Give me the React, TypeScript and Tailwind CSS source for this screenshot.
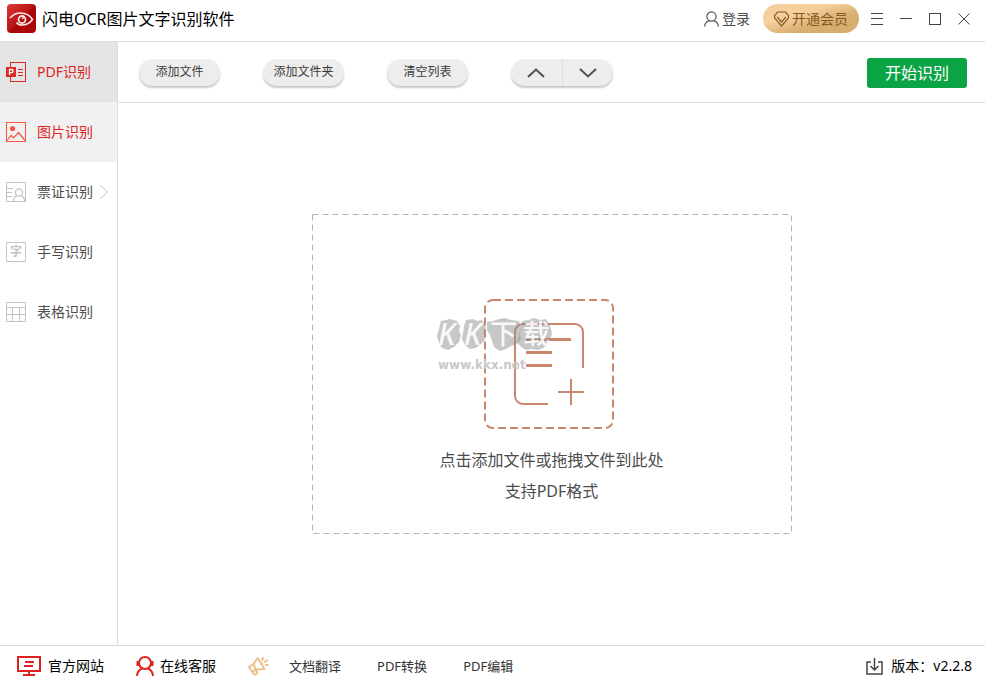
import { useState } from "react";
import type { ReactNode } from "react";

function LogoIcon() {
  return (
    <svg width="29" height="29" viewBox="0 0 29 29" fill="none" aria-hidden="true">
      <defs>
        <linearGradient id="logo-bg" x1="0" y1="0" x2="29" y2="29" gradientUnits="userSpaceOnUse">
          <stop offset="0" stopColor="#dd3a38" />
          <stop offset="0.45" stopColor="#bb1718" />
          <stop offset="0.55" stopColor="#a80607" />
          <stop offset="1" stopColor="#b00a0b" />
        </linearGradient>
      </defs>
      <rect width="29" height="29" rx="4" fill="url(#logo-bg)" />
      <path d="M3 14C6 10.500 9.500 9 13.500 9c5 0 9.500 2.500 12 6.500-2.500 3.500-6 5.500-10.500 5.500-2.500 0-4.500-1-5.500-2.500" stroke="#fbe6e6" strokeWidth="1.600" />
      <circle cx="15" cy="15.500" r="3.500" stroke="#fbe6e6" strokeWidth="1.800" />
      <path d="M15 15l2.500-2" stroke="#fbe6e6" strokeWidth="1.500" />
    </svg>
  );
}

function UserIcon() {
  return (
    <svg width="15" height="16" viewBox="0 0 15 16" fill="none" stroke="#555" strokeWidth="1.200" aria-hidden="true">
      <circle cx="7.500" cy="5.500" r="4.600" />
      <path d="M.6 15.500c.2-3 2-5 4.600-5.900M14.400 15.500c-.2-3-2-5-4.600-5.900" />
    </svg>
  );
}

function DiamondIcon() {
  return (
    <svg width="15" height="16" viewBox="0 0 15 16" fill="none" stroke="#86591f" strokeWidth="1.200" aria-hidden="true">
      <path d="M3.500 1h8l3 3.600v2.200L7.500 15 .6 6.800V4.600z" />
      <path d="M3.200 6l4.300 5L11.800 6" />
    </svg>
  );
}

function PdfIcon() {
  return (
    <svg width="20" height="20" viewBox="0 0 20 20" fill="none" aria-hidden="true">
      <rect x="4.500" y=".5" width="15" height="19" stroke="#dc2a27" />
      <path d="M12 7.500h5M12 10.500h5M12 13.500h5" stroke="#dc2a27" />
      <rect y="5" width="10" height="10" fill="#dc2a27" />
      <path d="M3.500 13V7.500h2a1.500 1.500 0 0 1 0 3.200h-2" stroke="#fff" strokeWidth="1.300" />
    </svg>
  );
}

function PictureIcon() {
  return (
    <svg width="20" height="20" viewBox="0 0 20 20" fill="none" stroke="#fa5647" aria-hidden="true">
      <rect x=".5" y=".5" width="19" height="19" />
      <circle cx="6.500" cy="6.500" r="2.600" fill="#fa5647" stroke="none" />
      <path d="M1 18.500l4-5 2.500 2.300L12.500 10.500l6.500 8M7.500 15.800l1.500-1.500" strokeWidth="1.200" />
    </svg>
  );
}

function CardIcon() {
  return (
    <svg width="20" height="20" viewBox="0 0 20 20" fill="none" stroke="#c3c3c3" aria-hidden="true">
      <rect x=".5" y=".5" width="19" height="19" />
      <path d="M1 6.500h6M1 10.500h5M1 14.500h5" />
      <circle cx="13" cy="10.500" r="3.600" strokeWidth="1.200" />
      <path d="M7.500 19c0-2.800 1.400-4.600 3.500-5.300M18.500 19c0-2.800-1.400-4.600-3.500-5.300" strokeWidth="1.200" />
    </svg>
  );
}

function HandwritingIcon() {
  return (
    <span className="flex size-5 items-center justify-center border border-[#c3c3c3] text-[12px] leading-none font-bold text-[#c3c3c3]" aria-hidden="true">
      字
    </span>
  );
}

function TableIcon() {
  return (
    <svg width="20" height="20" viewBox="0 0 20 20" fill="none" stroke="#c3c3c3" aria-hidden="true">
      <rect x=".5" y=".5" width="19" height="19" />
      <path d="M1 5.500h18M1 12.500h18M6.500 6v13M13.500 6v13" />
    </svg>
  );
}

function MonitorIcon() {
  return (
    <svg width="24" height="20" viewBox="0 0 24 20" fill="none" stroke="#dc231f" strokeWidth="2" aria-hidden="true">
      <rect x="1" y="1" width="22" height="14" />
      <path d="M8 6h9M7 10h9M12 15v4M6 19h12" />
    </svg>
  );
}

function SupportIcon() {
  return (
    <svg width="18" height="20" viewBox="0 0 18 20" fill="none" stroke="#dc231f" strokeWidth="2" aria-hidden="true">
      <circle cx="9" cy="7" r="6" />
      <path d="M1 20c.2-3.500 2-6.200 5-7.500M17 20c-.2-3.500-2-6.200-5-7.500" />
      <path d="M2 5v5M16 5v5" strokeWidth="3" />
    </svg>
  );
}

function MegaphoneIcon() {
  return (
    <svg width="21" height="20" viewBox="0 0 21 20" fill="none" stroke="#efc28c" strokeWidth="2" strokeLinejoin="round" aria-hidden="true">
      <path d="M9.500 2l7 11-8.500.6-3.800 2.200L1 11.200l4.500-3z" />
      <path d="M5.500 8.200l2.500 5.400M4.500 15.800l1.800 3 3-1.600-1.300-3.300" />
      <path d="M13.800 4.800l1.800-3.800M16 6.500l3.800-2.600M17 9h3.500" />
      <path d="M12.500 6.500c1.500 0 2.200 1.200 1.700 2.500" strokeWidth="1.500" />
    </svg>
  );
}

function DownloadIcon() {
  return (
    <svg width="17" height="17" viewBox="0 0 17 17" fill="none" stroke="#444" strokeWidth="1.500" aria-hidden="true">
      <path d="M5 4H1v12h15V4h-4" />
      <path d="M8.500 0v12M4.500 8l4 4 4-4" />
    </svg>
  );
}

function AddFileIcon() {
  return (
    <svg width="136" height="130" viewBox="0 0 136 130" fill="none" stroke="#c9876e" strokeWidth="2" aria-hidden="true">
      <rect x="1" y="1" width="128" height="128" rx="8" strokeDasharray="8 4" />
      <path d="M64 105H39a8 8 0 0 1-8-8V33a8 8 0 0 1 8-8h52a8 8 0 0 1 8 8v36" />
      <path d="M42 40.500h45M42 53.500h26M42 66.500h26" strokeWidth="3" />
      <path d="M87 80v26M74 93h26" />
    </svg>
  );
}

function Watermark() {
  return (
    <svg
      className="pointer-events-none absolute top-[90px] left-[120px]"
      width="126"
      height="76"
      viewBox="-4 -12 126 76"
      fontFamily="'Noto Sans', 'Noto Sans CJK SC', sans-serif"
    >
      <g fill="#8f8f8f" fillOpacity="0.500">
        <path d="M5 5l5-1 4-1 7 2 3 5-1 5 2 4-2 7-5 5-6 3-6-2-3-5-2-7 2-7z" />
        <path d="M30 4l7-1 4 2 5-1 3 5 1 5-2 5 1 5-4 4-5 4-6 1-5-4-3-6 1-6 1-7z" />
        <path d="M51 6l6-1 6-2 6-1 6 2 8 1 2 6-1 6 1 6-4 5-6 2-5 3-6 2-6-4-2-6-2-6-3-5z" />
        <path d="M86 5l7-1 5-2 6 2 6-1 3 5 2 5 1 5-2 5-2 6-5 3-5 2-6-1-6 1-5-3-4-5 2-6 1-6z" />
      </g>
      <g fill="#fff" fillOpacity="0.900" fontSize="27" fontWeight="500">
        <text x="2" y="29" fontSize="30" fontStyle="italic">K</text>
        <text x="28" y="29" fontSize="30" fontStyle="italic">K</text>
        <text x="54" y="28">下</text>
        <text x="87" y="28">载</text>
      </g>
      <text x="2" y="53" fill="#c9c9c9" fontSize="12" fontWeight="700" fontFamily="'DejaVu Sans', sans-serif">
        www.kkx.net
      </text>
    </svg>
  );
}

type NavItem = {
  label: string;
  icon: ReactNode;
  className: string;
  hasMore?: boolean;
};

const navItems: NavItem[] = [
  { label: "PDF识别", icon: <PdfIcon />, className: "bg-[#e4e4e4] text-[#dc231f]" },
  { label: "图片识别", icon: <PictureIcon />, className: "bg-[#f1f1f1] text-[#dc231f]" },
  { label: "票证识别", icon: <CardIcon />, className: "text-[#4c4c4c]", hasMore: true },
  { label: "手写识别", icon: <HandwritingIcon />, className: "text-[#4c4c4c]" },
  { label: "表格识别", icon: <TableIcon />, className: "text-[#4c4c4c]" },
];

const fileActions = ["添加文件", "添加文件夹", "清空列表"];

export default function App() {
  const [current, setCurrent] = useState("PDF识别");

  return (
    <div className="flex min-h-screen flex-col bg-white font-['Noto_Sans','Noto_Sans_CJK_SC',sans-serif] text-sm text-[#4c4c4c]">
      <header className="flex h-[42px] items-center border-b border-[#dcdcdc] pr-[15px] pb-1 pl-[7px]">
        <LogoIcon />
        <h1 className="ml-1.5 text-base leading-6 text-black">闪电OCR图片文字识别软件</h1>

        <div className="ml-auto flex items-center">
          <button type="button" className="flex items-center gap-[3px] leading-5">
            <UserIcon />
            登录
          </button>
          <button
            type="button"
            className="ml-[13px] flex h-[29px] w-24 items-center justify-center gap-[3px] rounded-full bg-linear-to-br from-[#f7cf9e] from-35% to-[#d8ad70] to-65% leading-5 text-[#86591f]"
          >
            <DiamondIcon />
            开通会员
          </button>
          <div className="ml-3 flex items-center gap-[17px] text-[#444]">
            <button type="button" aria-label="菜单">
              <svg width="12" height="12" viewBox="0 0 12 12" stroke="currentColor">
                <path d="M0 .5h12M0 5.500h12M0 11.500h12" />
              </svg>
            </button>
            <button type="button" aria-label="最小化">
              <svg width="12" height="12" viewBox="0 0 12 12" stroke="currentColor">
                <path d="M0 5.500h12" />
              </svg>
            </button>
            <button type="button" aria-label="最大化">
              <svg width="12" height="12" viewBox="0 0 12 12" fill="none" stroke="currentColor">
                <rect x=".5" y=".5" width="11" height="11" />
              </svg>
            </button>
            <button type="button" aria-label="关闭">
              <svg width="12" height="12" viewBox="0 0 12 12" stroke="currentColor">
                <path d="M.5.5l11 11M11.500.5l-11 11" />
              </svg>
            </button>
          </div>
        </div>
      </header>

      <div className="flex flex-1">
        <nav className="w-[118px] shrink-0 border-r border-[#dcdcdc]">
          {navItems.map((item) => (
            <button
              key={item.label}
              type="button"
              aria-current={current === item.label ? "page" : undefined}
              onClick={() => setCurrent(item.label)}
              className={`flex h-15 w-full items-center pl-1.5 leading-5 ${item.className}`}
            >
              {item.icon}
              <span className="ml-[11px]">{item.label}</span>
              {item.hasMore && (
                <svg className="ml-[7px]" width="8" height="14" viewBox="0 0 8 14" fill="none" stroke="#c3c3c3" aria-hidden="true">
                  <path d="M.5.5L7.500 7l-7 6.500" />
                </svg>
              )}
            </button>
          ))}
        </nav>

        <main className="flex flex-1 flex-col">
          <div className="flex h-[61px] items-center gap-[43px] border-b border-[#dcdcdc] pt-px pr-[18px] pl-[21px]">
            {fileActions.map((label) => (
              <button
                key={label}
                type="button"
                className="h-[27px] w-[81px] rounded-full bg-[#ededed] pb-px text-xs leading-4 text-[#3c3c3c] shadow-[0_2px_2px_#00000038]"
              >
                {label}
              </button>
            ))}
            <div className="flex h-[27px] w-[102px] rounded-full bg-[#ededed] shadow-[0_2px_2px_#00000038]">
              <button type="button" aria-label="上移" className="flex flex-1 items-center justify-center border-r border-[#dfdfdf]">
                <svg width="18" height="10" viewBox="0 0 18 10" fill="none" stroke="#505050" strokeWidth="2">
                  <path d="M1 9l8-7.500L17 9" />
                </svg>
              </button>
              <button type="button" aria-label="下移" className="flex flex-1 items-center justify-center">
                <svg width="18" height="10" viewBox="0 0 18 10" fill="none" stroke="#505050" strokeWidth="2">
                  <path d="M1 1l8 7.500L17 1" />
                </svg>
              </button>
            </div>
            <button type="button" className="ml-auto h-[30px] w-[100px] rounded-[3px] bg-[#0ba445] text-base leading-6 text-white">
              开始识别
            </button>
          </div>

          <div className="flex flex-1 items-center justify-center">
            <button type="button" className="relative flex h-80 w-[480px] flex-col items-center pt-[85px] text-base leading-[31px]">
              <svg className="absolute inset-0 size-full" fill="none" stroke="#b4b4b4" aria-hidden="true">
                <svg x="0.500" y="0.500" width="480" height="320" overflow="visible">
                  <rect width="479" height="319" strokeDasharray="6 4" />
                </svg>
              </svg>
              <AddFileIcon />
              <span className="mt-4">点击添加文件或拖拽文件到此处</span>
              <span>支持PDF格式</span>
              <Watermark />
            </button>
          </div>
        </main>
      </div>

      <footer className="flex h-[37px] items-center border-t border-[#dcdcdc] pt-1 pr-[13px] pl-[17px] leading-5 text-black">
        <a href="#site" className="flex items-center gap-[7px]">
          <MonitorIcon />
          官方网站
        </a>
        <a href="#support" className="ml-8 flex items-center gap-1.5">
          <SupportIcon />
          在线客服
        </a>
        <div className="ml-8 flex items-center text-[13px] text-[#333]">
          <MegaphoneIcon />
          <a href="#translate" className="ml-5">
            文档翻译
          </a>
          <a href="#convert" className="ml-9">
            PDF转换
          </a>
          <a href="#edit" className="ml-9">
            PDF编辑
          </a>
        </div>
        <div className="ml-auto flex items-center gap-2">
          <DownloadIcon />
          <span>版本：v2.2.8</span>
        </div>
      </footer>
    </div>
  );
}
